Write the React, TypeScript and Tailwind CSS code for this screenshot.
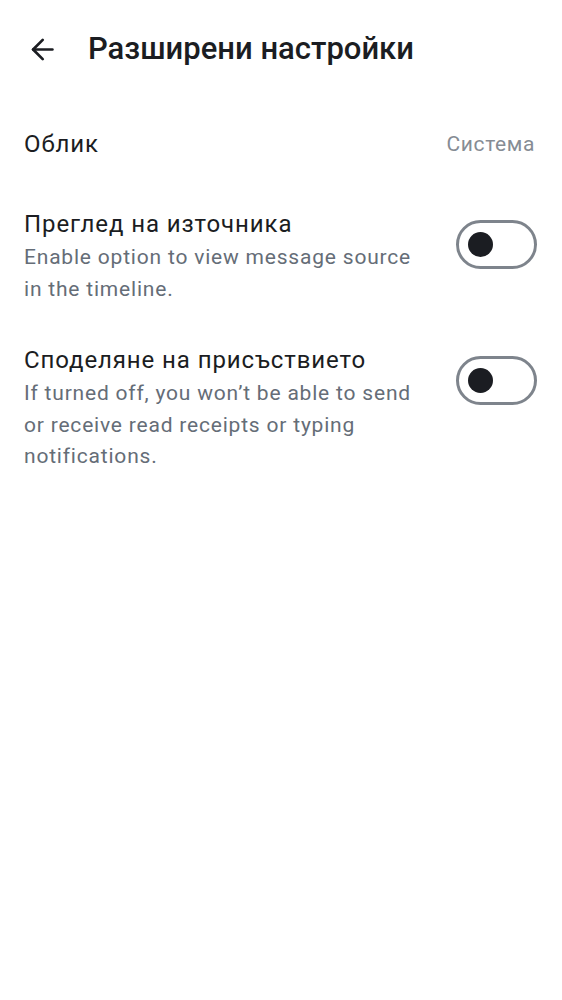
import { useState } from 'react';

interface ToggleRowProps {
  title: string;
  description: string;
  checked: boolean;
  onChange: (value: boolean) => void;
}

const Toggle = ({ checked, onChange }: { checked: boolean; onChange: (v: boolean) => void }) => (
  <button
    onClick={() => onChange(!checked)}
    className={`shrink-0 mt-[10px] w-[81px] h-[49px] rounded-full border-[3px] flex items-center px-[9px] ${
      checked ? 'border-[#1b1d22] bg-[#1b1d22] justify-end' : 'border-[#7e848c] bg-white justify-start'
    }`}
  >
    <span className={`block w-[25px] h-[25px] rounded-full ${checked ? 'bg-white' : 'bg-[#1b1d22]'}`} />
  </button>
);

const ToggleRow = ({ title, description, checked, onChange }: ToggleRowProps) => (
  <div className="flex items-start gap-[32px]">
    <div className="flex-1 min-w-0">
      <div className="text-[24px] leading-[28px] tracking-[0.9px] text-[#1b1d22]">{title}</div>
      <div className="mt-[4px] text-[21px] leading-[31.5px] tracking-[0.8px] text-[#656d77]">{description}</div>
    </div>
    <Toggle checked={checked} onChange={onChange} />
  </div>
);

export default function App() {
  const [viewSource, setViewSource] = useState(false);
  const [presence, setPresence] = useState(false);

  return (
    <div className="min-h-screen bg-white" style={{ fontFamily: 'Roboto, "Noto Sans", sans-serif' }}>
      <header className="flex items-center pt-[31px] pl-[30px]">
        <button className="shrink-0 w-[25px] h-[25px] flex items-center justify-center text-[#1b1d22]">
          <svg width="25" height="25" viewBox="0 0 24 24" fill="none" stroke="currentColor" strokeWidth="2.6" strokeLinecap="round" strokeLinejoin="round">
            <path d="M21.5 12H3" />
            <path d="M12.2 2.8 3 12l9.2 9.2" />
          </svg>
        </button>
        <h1 className="ml-[33px] text-[31px] leading-[36px] font-medium text-[#1b1d22]">Разширени настройки</h1>
      </header>

      <div className="pl-6 pr-[25px]">
        <div className="mt-[63px] flex items-center justify-between">
          <span className="text-[24px] leading-[28px] tracking-[0.9px] text-[#1b1d22]">Облик</span>
          <span className="mr-[2px] text-[21px] leading-[28px] tracking-[0.6px] text-[#868c94]">Система</span>
        </div>

        <div className="mt-[52px]">
          <ToggleRow
            title="Преглед на източника"
            description="Enable option to view message source in the timeline."
            checked={viewSource}
            onChange={setViewSource}
          />
        </div>

        <div className="mt-[41px]">
          <ToggleRow
            title="Споделяне на присъствието"
            description="If turned off, you won’t be able to send or receive read receipts or typing notifications."
            checked={presence}
            onChange={setPresence}
          />
        </div>
      </div>
    </div>
  );
}
